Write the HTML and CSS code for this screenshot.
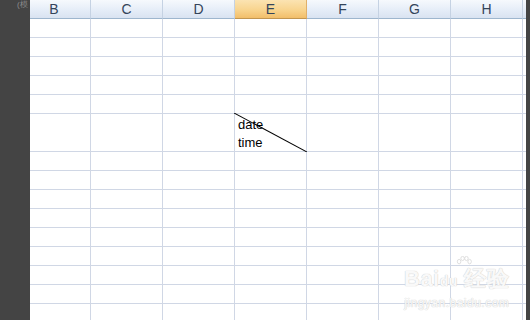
FILE: index.html
```html
<!DOCTYPE html>
<html lang="en">
<head>
    <meta charset="UTF-8">
    <title>Sheet</title>
    <link rel="stylesheet" href="styles.css">
</head>
<body>
    <div class="window">
        <!-- Left dark edge -->
        <div class="side side-left"><span class="cut-text">(模</span></div>

        <!-- Worksheet -->
        <div class="sheet">
            <div class="row head">
                <div class="cell col-b">B</div>
                <div class="cell">C</div>
                <div class="cell">D</div>
                <div class="cell active">E</div>
                <div class="cell">F</div>
                <div class="cell">G</div>
                <div class="cell">H</div>
                <div class="cell tail"></div>
            </div>
            <div id="rows"></div>
        </div>

        <div class="side side-right"></div>

        <!-- Watermark -->
        <div class="watermark">
            <svg class="wm-paw" viewBox="0 0 24 20">
                <ellipse cx="5" cy="8" rx="2.5" ry="3.2"/>
                <ellipse cx="10" cy="3.5" rx="2.5" ry="3"/>
                <ellipse cx="15.5" cy="3.5" rx="2.5" ry="3"/>
                <ellipse cx="20" cy="8" rx="2.5" ry="3.2"/>
            </svg>
            <div class="wm-logo">Bai<span class="paw">du</span> 经验</div>
            <div class="wm-url">jingyan.baidu.com</div>
        </div>
    </div>

    <script>
        const rows = document.getElementById('rows');
        const cols = ['col-b', '', '', '', '', '', '', 'tail'];

        for (let r = 1; r <= 16; r++) {
            const row = document.createElement('div');
            row.className = 'row';
            if (r === 6) row.classList.add('tall');

            cols.forEach((c, i) => {
                const cell = document.createElement('div');
                cell.className = 'cell ' + c;
                if (r === 6 && i === 3) {
                    cell.classList.add('diag');
                    cell.innerHTML = '<svg class="slash" viewBox="0 0 72 38" preserveAspectRatio="none"><line x1="0" y1="0" x2="72" y2="38" stroke="#000" stroke-width="1"/></svg>' +
                        '<span>date</span><span>time</span>';
                }
                row.appendChild(cell);
            });
            rows.appendChild(row);
        }
    </script>
</body>
</html>
```

FILE: styles.css
```css
* {
    box-sizing: border-box;
    margin: 0;
    padding: 0;
}

body {
    width: 530px;
    height: 320px;
    overflow: hidden;
    background: #fff;
    font-family: 'Liberation Sans', Arial, sans-serif;
}

.window {
    display: flex;
    height: 320px;
    position: relative;
}

.side {
    background: #444444;
    flex-shrink: 0;
}

.side-left {
    width: 30px;
    overflow: hidden;
}

.side-right {
    width: 4px;
    margin-left: auto;
}

.cut-text {
    display: block;
    margin-left: 17px;
    font-size: 8px;
    line-height: 9px;
    color: #8c8c8c;
    white-space: nowrap;
}

/* Sheet grid */
.sheet {
    width: 496px;
    overflow: hidden;
}

.row {
    display: flex;
    height: 19px;
}

.row.tall {
    height: 38px;
}

.cell {
    width: 72px;
    flex-shrink: 0;
    border-right: 1px solid #d0d7e5;
    border-bottom: 1px solid #d0d7e5;
    position: relative;
}

.cell.col-b {
    width: 61px;
}

.cell.tail {
    width: 3px;
    border-right: none;
}

.head .cell {
    background: linear-gradient(to bottom, #f6f9fd 0%, #e4ecf7 60%, #d9e3f1 100%);
    border-right: 1px solid #c5d2e3;
    border-bottom: 1px solid #9eb6ce;
    color: #34445a;
    font-size: 14px;
    line-height: 18px;
    text-align: center;
}

.head .cell.col-b {
    padding-right: 12px;
}

.head .cell.active {
    background: linear-gradient(to bottom, #fbe3b2 0%, #f8d48e 55%, #f2be6a 100%);
    border-right-color: #e0b06a;
    border-bottom-color: #c29650;
}

.head .cell.tail {
    border-right: none;
}

/* Diagonal header cell */
.diag {
    display: flex;
    flex-direction: column;
    padding: 2px 0 0 3px;
    font-size: 13px;
    line-height: 18px;
    color: #000;
}

.slash {
    position: absolute;
    left: -1px;
    top: -1px;
    width: 73px;
    height: 39px;
}

/* Watermark */
.watermark {
    position: absolute;
    left: 404px;
    top: 256px;
    color: rgba(255, 255, 255, 0.9);
    text-shadow: 0 0 1px #cfcfcf, 0 0 1px #cfcfcf;
    text-align: center;
    display: flex;
    flex-direction: column;
    align-items: center;
}

.wm-paw {
    width: 24px;
    height: 14px;
    margin-left: 14px;
    margin-bottom: -4px;
    fill: #fff;
    stroke: #d2d2d2;
    stroke-width: 1;
}

.wm-logo {
    font-size: 22px;
    font-weight: bold;
    line-height: 26px;
    letter-spacing: 0.5px;
}

.paw {
    font-size: 14px;
}

.wm-url {
    font-size: 12px;
    line-height: 18px;
    letter-spacing: 0.5px;
}
```
